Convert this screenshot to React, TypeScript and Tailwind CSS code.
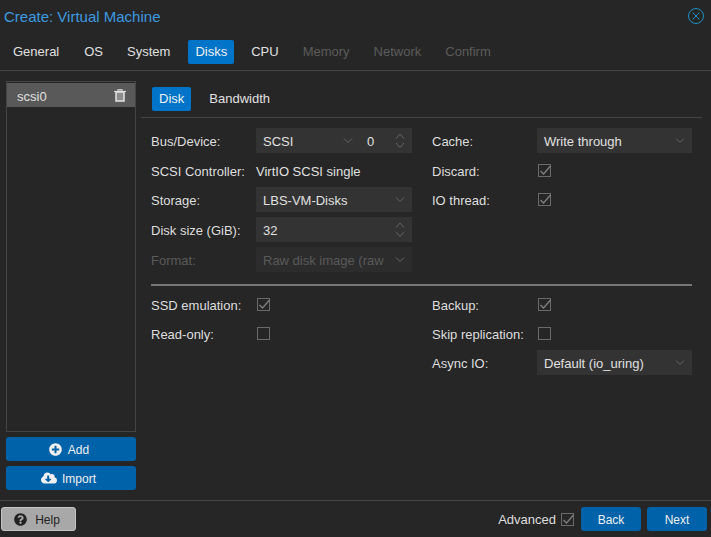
import { FaPlusCircle, FaCloudDownloadAlt, FaQuestionCircle } from "react-icons/fa";

const font = { fontFamily: '"Liberation Sans", Arial, sans-serif' };

function Chevron() {
  return (
    <svg width="12" height="8" viewBox="0 0 12 8" className="shrink-0">
      <path d="M2 1.5 L6 5.5 L10 1.5" fill="none" stroke="#666666" strokeWidth="1" />
    </svg>
  );
}

function Spinner() {
  return (
    <svg width="12" height="18" viewBox="0 0 12 18" className="shrink-0">
      <path d="M2 6.5 L6 2 L10 6.5 M2 11 L6 15.5 L10 11" fill="none" stroke="#666666" strokeWidth="1" />
    </svg>
  );
}

function Trash() {
  return (
    <svg width="12" height="13" viewBox="0 0 12 13" className="shrink-0">
      <rect x="2" y="3" width="8" height="9" fill="#8c8c8c" stroke="#dcdcdc" strokeWidth="1.6" />
      <path d="M0 2.5 H12" stroke="#dcdcdc" strokeWidth="1.2" />
      <path d="M4 2 V0.8 H8 V2" fill="none" stroke="#dcdcdc" strokeWidth="1.2" />
    </svg>
  );
}

function Check({ on }: { on?: boolean }) {
  return (
    <div className="relative h-[13px] w-[13px] border border-[#6a6a6a]">
      {on && (
        <svg width="14" height="13" viewBox="0 0 14 13" className="absolute left-[-1px] top-[-1px]">
          <path d="M2.5 7 L5.5 10 L12.5 2" fill="none" stroke="#808080" strokeWidth="1.3" />
        </svg>
      )}
    </div>
  );
}

function Field({ children, icon, disabled }: { children: React.ReactNode; icon: React.ReactNode; disabled?: boolean }) {
  return (
    <div className={`flex h-[25px] flex-1 items-center justify-between overflow-hidden pl-[7px] pr-[6px] ${disabled ? "bg-[#2c2c2c] text-[#5a5a5a]" : "bg-[#333333] text-[#e0e0e0]"}`}>
      <span className="whitespace-nowrap pt-[1px]">{children}</span>
      {icon}
    </div>
  );
}

function Row({ label, children, w = "w-[105px]", className = "", dim }: { label: string; children?: React.ReactNode; w?: string; className?: string; dim?: boolean }) {
  return (
    <div className={`flex h-[25px] items-center ${className}`}>
      <div className={`${w} shrink-0 whitespace-nowrap pt-[1px] ${dim ? "text-[#5a5a5a]" : "text-[#dedede]"}`}>{label}</div>
      {children}
    </div>
  );
}

function Btn({ children, className = "" }: { children: React.ReactNode; className?: string }) {
  return (
    <div className={`flex h-[24px] items-center justify-center rounded-[3px] bg-[#0062a8] text-[12px] text-[#f0f0f0] ${className}`}>
      {children}
    </div>
  );
}

export default function App() {
  const tabs = [
    { t: "General", c: "text-[#e0e0e0] mr-[1px]" },
    { t: "OS", c: "text-[#e0e0e0]" },
    { t: "System", c: "text-[#e0e0e0] mr-[1px]" },
    { t: "Disks", c: "bg-[#0074c8] text-[#f0f0f0]" },
    { t: "CPU", c: "text-[#e0e0e0]" },
    { t: "Memory", c: "text-[#5c5c5c]" },
    { t: "Network", c: "text-[#5c5c5c]" },
    { t: "Confirm", c: "text-[#5c5c5c]" },
  ];
  return (
    <div style={font} className="flex h-[537px] w-[711px] flex-col overflow-hidden bg-[#262626] text-[13px] leading-[15px]">
      <div className="flex h-[40px] shrink-0 items-start justify-between pl-[4px] pr-[7px] pt-[8px]">
        <span className="text-[15px] leading-[17px] text-[#3d9ae0]">Create: Virtual Machine</span>
        <svg width="16" height="16" viewBox="0 0 16 16">
          <circle cx="8" cy="8" r="7.5" fill="none" stroke="#1f8fc4" strokeWidth="1" />
          <path d="M4.5 4.5 L11.5 11.5 M11.5 4.5 L4.5 11.5" stroke="#1f8fc4" strokeWidth="1" />
        </svg>
      </div>

      <div className="flex h-[31px] shrink-0 items-start gap-[10px] border-b border-[#444444] pl-[6px]">
        {tabs.map(({ t, c }) => (
          <div key={t} className={`flex h-[24px] items-center rounded-[2px] px-[7px] pb-[2px] ${c}`}>
            {t}
          </div>
        ))}
      </div>

      <div className="flex min-h-0 flex-1">
        <div className="flex w-[141px] shrink-0 flex-col pl-[6px] pr-[5px] pt-[10px]">
          <div className="h-[351px] border border-[#444444] pt-[1px]">
            <div className="flex h-[24px] items-center justify-between bg-[#595959] pl-[10px] pr-[9px] text-[#e0e0e0]">
              <span className="pt-[2px]">scsi0</span>
              <Trash />
            </div>
          </div>
          <Btn className="mt-[5px] pr-[4px]">
            <FaPlusCircle className="mr-[6px] text-[13px]" />
            <span className="pt-[2px]">Add</span>
          </Btn>
          <Btn className="mt-[5px] pr-[5px]">
            <FaCloudDownloadAlt className="mr-[5px] text-[16px]" />
            <span className="pt-[2px]">Import</span>
          </Btn>
        </div>

        <div className="flex min-w-0 flex-1 flex-col pt-[16px]">
          <div className="mr-[9px] flex h-[31px] shrink-0 items-start gap-[4px] border-b border-[#444444] pl-[11px]">
            <div className="flex h-[24px] items-center rounded-[2px] bg-[#0074c8] px-[7px] pb-[2px] text-[#f0f0f0]">Disk</div>
            <div className="flex h-[24px] items-center px-[14px] pb-[2px] text-[#e0e0e0]">Bandwidth</div>
          </div>

          <div className="flex flex-col pl-[10px] pr-[19px] pt-[10px]">
            <div className="grid grid-cols-[262px_260px] gap-x-[19px]">
              <div className="flex w-[261px] flex-col">
                <Row label="Bus/Device:">
                  <div className="flex flex-1">
                    <Field icon={<Chevron />}>SCSI</Field>
                    <div className="flex h-[25px] w-[52px] items-center justify-between bg-[#333333] pl-[7px] pr-[6px] text-[#e0e0e0]">
                      <span className="pt-[1px]">0</span>
                      <Spinner />
                    </div>
                  </div>
                </Row>
                <Row label="SCSI Controller:" className="mt-[5px]"><span className="pt-[1px] text-[#e0e0e0]">VirtIO SCSI single</span></Row>
                <Row label="Storage:" className="mt-[4px]"><Field icon={<Chevron />}>LBS-VM-Disks</Field></Row>
                <Row label="Disk size (GiB):" className="mt-[5px]"><Field icon={<Spinner />}>32</Field></Row>
                <Row label="Format:" dim className="mt-[5px]"><Field disabled icon={<Chevron />}>Raw disk image (raw</Field></Row>
              </div>
              <div className="flex flex-col">
                <Row label="Cache:"><Field icon={<Chevron />}>Write through</Field></Row>
                <Row label="Discard:" className="mt-[5px]"><div className="pl-[1px]"><Check on /></div></Row>
                <Row label="IO thread:" className="mt-[4px]"><div className="pl-[1px]"><Check on /></div></Row>
              </div>
            </div>

            <div className="mt-[12px] h-[2px] bg-[#777777]" />

            <div className="mt-[6px] grid grid-cols-[262px_260px] gap-x-[19px]">
              <div className="flex flex-col">
                <Row label="SSD emulation:"><div className="pl-[1px]"><Check on /></div></Row>
                <Row label="Read-only:" className="mt-[4px]"><div className="pl-[1px]"><Check /></div></Row>
              </div>
              <div className="flex flex-col">
                <Row label="Backup:"><div className="pl-[1px]"><Check on /></div></Row>
                <Row label="Skip replication:" className="mt-[4px]"><div className="pl-[1px]"><Check /></div></Row>
                <Row label="Async IO:" className="mt-[4px]"><Field icon={<Chevron />}>Default (io_uring)</Field></Row>
              </div>
            </div>
          </div>
        </div>
      </div>

      <div className="flex h-[37px] shrink-0 items-start justify-between border-t border-[#444444] pl-[1px] pr-[4px] pt-[6px]">
        <div className="flex h-[24px] w-[75px] items-center justify-center rounded-[3px] border border-[#c4c4c4] bg-[#a8a8a8] pr-[3px] text-[12px] text-[#222222]">
          <FaQuestionCircle className="mr-[8px] text-[13px]" />
          <span className="pt-[2px]">Help</span>
        </div>
        <div className="flex items-center">
          <span className="pt-[1px] text-[#dedede]">Advanced</span>
          <div className="ml-[5px]"><Check on /></div>
          <Btn className="ml-[7px] w-[60px]"><span className="pt-[2px]">Back</span></Btn>
          <Btn className="ml-[6px] w-[60px]"><span className="pt-[2px]">Next</span></Btn>
        </div>
      </div>
    </div>
  );
}
